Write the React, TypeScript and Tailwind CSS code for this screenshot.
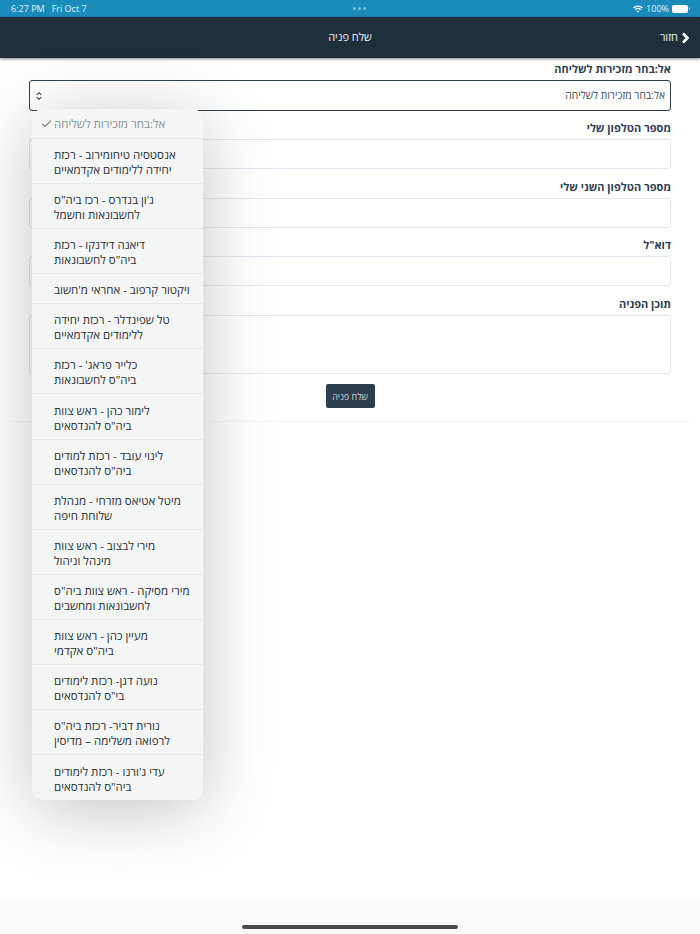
import { Check, ChevronsUpDown } from "lucide-react";

const options = [
	["אנסטסיה טיחומירוב - רכזת", "יחידה ללימודים אקדמאיים"],
	['ג\'ון בנדרס - רכז ביה"ס', "לחשבונאות וחשמל"],
	["דיאנה דידנקו - רכזת", 'ביה"ס לחשבונאות'],
	["ויקטור קרפוב - אחראי מ'חשוב"],
	["טל שפינדלר - רכזת יחידה", "ללימודים אקדמאיים"],
	["כלייר פראג' - רכזת", 'ביה"ס לחשבונאות'],
	["לימור כהן - ראש צוות", 'ביה"ס להנדסאים'],
	["לינוי עובד - רכזת למודים", 'ביה"ס להנדסאים'],
	["מיטל אטיאס מזרחי - מנהלת", "שלוחת חיפה"],
	["מירי לבצוב - ראש צוות", "מינהל וניהול"],
	['מירי מסיקה - ראש צוות ביה"ס', "לחשבונאות ומחשבים"],
	["מעיין כהן - ראש צוות", 'ביה"ס אקדמי'],
	["נועה דגן- רכזת לימודים", 'בי"ס להנדסאים'],
	['נורית דביר- רכזת ביה"ס', "לרפואה משלימה – מדיסין"],
	["עדי ג'ורנו - רכזת לימודים", 'ביה"ס להנדסאים'],
];

function Field({ label, tall }: { label: string; tall?: boolean }) {
	return (
		<div>
			<label className="block text-[11px] leading-[18px] font-bold text-[#2f4050] mb-[2px]">
				{label}
			</label>
			<div
				className={`bg-white border border-[#dfe7f0] rounded-[3px] ${tall ? "h-[59px]" : "h-[30px]"}`}
			/>
		</div>
	);
}

function Dropdown() {
	return (
		<div className="absolute left-[32px] top-[109px] w-[171px] rounded-[10px] bg-[#f4f6f6] shadow-[0_10px_70px_rgba(0,0,0,0.24)] overflow-hidden">
			<div className="h-[30px] flex items-center pl-[7px] pt-[1px] border-b border-[#e4e6e7]">
				<Check size={12} strokeWidth={2.5} className="text-[#8a8e90] w-[15px] shrink-0" />
				<span dir="rtl" className="text-[11.5px] text-[#8d9192]">
					אל:בחר מזכירות לשליחה
				</span>
			</div>
			{options.map((lines, i) => (
				<div
					key={i}
					className={`pl-[22px] pt-[2px] flex flex-col justify-center border-[#e4e6e7] ${i < options.length - 1 ? "border-b" : ""} ${lines.length > 1 ? "h-[45.1px]" : "h-[30px]"}`}
				>
					{lines.map((line) => (
						<span
							key={line}
							dir="rtl"
							className="block text-left text-[11.5px] leading-[15px] text-[#2b2f31]"
						>
							{line}
						</span>
					))}
				</div>
			))}
		</div>
	);
}

export default function App() {
	return (
		<div
			className="relative h-[934px] w-[700px] overflow-hidden bg-white flex flex-col"
			style={{ fontFamily: '"Open Sans", "Liberation Sans", sans-serif' }}
		>
			<div className="h-[17px] bg-[#1a8cbc] flex items-center justify-between pl-[11px] pr-[10px] text-[9px] text-[#e4f2f8]">
				<div className="flex gap-[7px]">
					<span>6:27 PM</span>
					<span>Fri Oct 7</span>
				</div>
				<div className="flex gap-[2px]">
					<span className="w-[3px] h-[3px] rounded-full bg-[#7cc3e0]" />
					<span className="w-[3px] h-[3px] rounded-full bg-[#7cc3e0]" />
					<span className="w-[3px] h-[3px] rounded-full bg-[#7cc3e0]" />
				</div>
				<div className="flex items-center gap-[3px]">
					<svg width="10" height="8" viewBox="0 0 20 16" fill="none" stroke="#fff" strokeWidth="2.4">
						<path d="M1 6 a13 13 0 0 1 18 0" />
						<path d="M4.5 9.5 a8 8 0 0 1 11 0" />
						<path d="M10 15 L7.5 12.5 a3.5 3.5 0 0 1 5 0 Z" fill="#fff" stroke="none" />
					</svg>
					<span>100%</span>
					<div className="flex items-center gap-[1px]">
						<div className="w-[16px] h-[8px] rounded-[2px] bg-white" />
						<div className="w-[1px] h-[3px] rounded-r-full bg-[#a8d5e8]" />
					</div>
				</div>
			</div>
			<header
				dir="rtl"
				className="h-[41px] bg-[#1f303c] shadow-[0_1px_3px_rgba(0,0,0,0.5)] relative flex items-center justify-between text-[#eef1f3] text-[11px] pr-[10px]"
			>
				<div className="flex items-center gap-[3px]">
					<svg width="9" height="12" viewBox="0 0 9 12" fill="none" stroke="#fff" strokeWidth="2.6">
						<path d="M2 1.5 L6.5 6 L2 10.5" />
					</svg>
					<span>חזור</span>
				</div>
				<span className="absolute left-0 right-0 text-center">שלח פניה</span>
			</header>
			<main dir="rtl" className="px-[29px] flex flex-col pt-[2px]">
				<div>
					<label className="block text-[11px] leading-[18px] font-bold text-[#2f4050] mb-[2px]">
						אל:בחר מזכירות לשליחה
					</label>
					<div className="h-[31px] border border-[#2f4050] rounded-[3px] bg-white flex items-center justify-between pr-[5px] pl-[4px] text-[10.3px] text-[#3d4a55]">
						<span>אל:בחר מזכירות לשליחה</span>
						<ChevronsUpDown size={10} strokeWidth={2.5} className="text-[#2f4050]" />
					</div>
				</div>
				<div className="mt-[8px] flex flex-col gap-[8.67px]">
					<Field label="מספר הטלפון שלי" />
					<Field label="מספר הטלפון השני שלי" />
					<Field label='דוא"ל' />
					<Field label="תוכן הפניה" tall />
				</div>
				<div className="flex justify-center mt-[10.5px]">
					<button className="w-[49px] h-[24px] rounded-[2px] bg-[#2d3e50] text-[#d5dadf] text-[9px]">
						שלח פניה
					</button>
				</div>
			</main>
			<div className="mx-[11px] mt-[13px] h-px bg-[#f3f4f5]" />
			<div className="mt-auto h-[34px] bg-[#f9f9f9] flex justify-center items-end pb-[5px]">
				<div className="w-[216px] h-[4px] rounded-full bg-[#4a4a4a]" />
			</div>
			<Dropdown />
		</div>
	);
}
